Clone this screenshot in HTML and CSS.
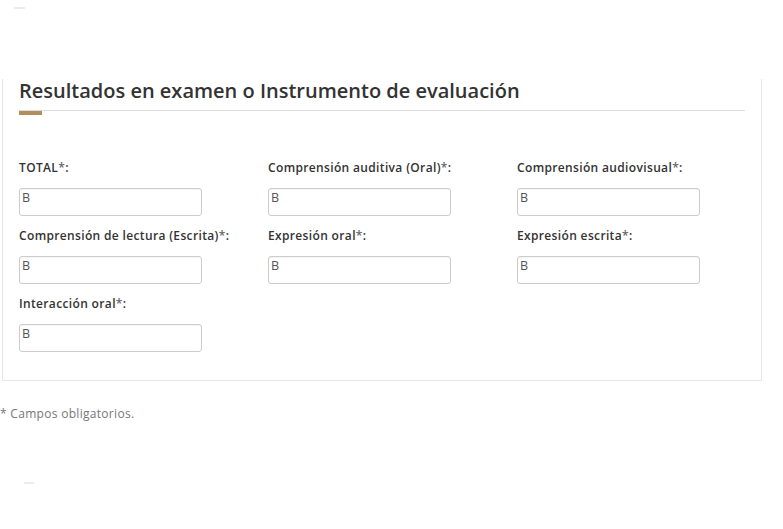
FILE: index.html
```html
<!DOCTYPE html>
<html lang="es">
<head>
  <meta charset="UTF-8" />
  <meta name="viewport" content="width=device-width, initial-scale=1.0" />
  <title>Resultados en examen</title>
  <link rel="stylesheet" href="styles.css">
</head>
<body>
  <div class="mark mark-top"></div>

  <!-- ======================= PANEL RESULTADOS ======================= -->
  <section class="panel">
    <h2 class="panel-title">Resultados en examen o Instrumento de evaluación</h2>
    <div class="fields">
      <div class="field">
        <label>TOTAL<span class="req">*</span>:</label>
        <input type="text" value="B" />
      </div>
      <div class="field">
        <label>Comprensión auditiva (Oral)<span class="req">*</span>:</label>
        <input type="text" value="B" />
      </div>
      <div class="field">
        <label>Comprensión audiovisual<span class="req">*</span>:</label>
        <input type="text" value="B" />
      </div>
      <div class="field">
        <label>Comprensión de lectura (Escrita)<span class="req">*</span>:</label>
        <input type="text" value="B" />
      </div>
      <div class="field">
        <label>Expresión oral<span class="req">*</span>:</label>
        <input type="text" value="B" />
      </div>
      <div class="field">
        <label>Expresión escrita<span class="req">*</span>:</label>
        <input type="text" value="B" />
      </div>
      <div class="field">
        <label>Interacción oral<span class="req">*</span>:</label>
        <input type="text" value="B" />
      </div>
    </div>
  </section>

  <p class="note">* Campos obligatorios.</p>

  <div class="mark mark-bottom"></div>
</body>
</html>
```

FILE: styles.css
```css
/* --- Reset & base ---------------------------------------------------- */
* { box-sizing: border-box; margin: 0; padding: 0; }
body { font-family: "Open Sans", "Noto Sans", sans-serif; color: #333; background: #fff; }

/* --- Faint marks ----------------------------------------------------- */
.mark { height: 2px; background: #ececec; }
.mark-top { width: 11px; margin: 7px 0 0 14px; }
.mark-bottom { width: 10px; margin: 60px 0 0 24px; }

/* --- Panel ----------------------------------------------------------- */
.panel {
  width: 760px;
  margin: 70px 0 0 2px;
  padding: 0 16px 28px 16px;
  border: 1px solid #e6e6e6;
  border-top: none;
}
.panel-title {
  font-size: 20px;
  font-weight: 600;
  line-height: 24px;
  color: #333;
  padding-bottom: 7px;
  border-bottom: 1px solid #dcdcdc;
  position: relative;
}
.panel-title::after {
  content: "";
  position: absolute;
  left: 0;
  bottom: -5px;
  width: 23px;
  height: 4px;
  background: #b38e5d;
}

/* --- Fields ---------------------------------------------------------- */
.fields {
  display: grid;
  grid-template-columns: 249px 249px 1fr;
  row-gap: 12px;
  margin-top: 49px;
}
.field label {
  display: block;
  font-size: 12px;
  font-weight: 600;
  line-height: 16px;
  letter-spacing: 0.35px;
  color: #333;
  margin-bottom: 12px;
}
.field .req { color: #666; }
.field input {
  display: block;
  width: 183px;
  height: 28px;
  border: 1px solid #ccc;
  border-radius: 3px;
  padding: 0 2px 9px;
  font-family: "Open Sans", sans-serif;
  font-size: 12.5px;
  color: #555;
  background: #fff;
  box-shadow: inset 0 1px 1px rgba(0,0,0,.05);
}

/* --- Note ------------------------------------------------------------ */
.note {
  margin-top: 25px;
  font-size: 12px;
  line-height: 16px;
  letter-spacing: 0.3px;
  color: #777;
}
```
